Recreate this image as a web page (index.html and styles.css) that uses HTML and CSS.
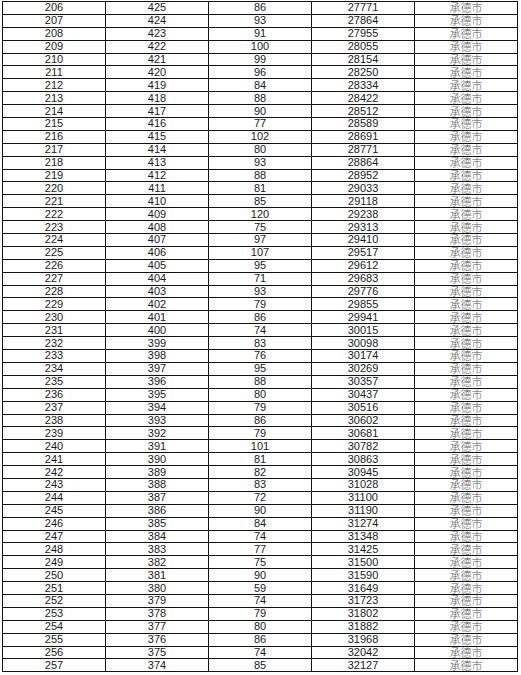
FILE: index.html
```html
<!DOCTYPE html>
<html lang="zh">
<head>
<meta charset="utf-8">
<link rel="stylesheet" href="styles.css">
</head>
<body>
<table class="score-table">
<colgroup><col class="c"><col class="c"><col class="c"><col class="c"><col class="c"></colgroup>
<tbody>
<tr><td>206</td><td>425</td><td>86</td><td>27771</td><td class="city">承德市</td></tr>
<tr><td>207</td><td>424</td><td>93</td><td>27864</td><td class="city">承德市</td></tr>
<tr><td>208</td><td>423</td><td>91</td><td>27955</td><td class="city">承德市</td></tr>
<tr><td>209</td><td>422</td><td>100</td><td>28055</td><td class="city">承德市</td></tr>
<tr><td>210</td><td>421</td><td>99</td><td>28154</td><td class="city">承德市</td></tr>
<tr><td>211</td><td>420</td><td>96</td><td>28250</td><td class="city">承德市</td></tr>
<tr><td>212</td><td>419</td><td>84</td><td>28334</td><td class="city">承德市</td></tr>
<tr><td>213</td><td>418</td><td>88</td><td>28422</td><td class="city">承德市</td></tr>
<tr><td>214</td><td>417</td><td>90</td><td>28512</td><td class="city">承德市</td></tr>
<tr><td>215</td><td>416</td><td>77</td><td>28589</td><td class="city">承德市</td></tr>
<tr><td>216</td><td>415</td><td>102</td><td>28691</td><td class="city">承德市</td></tr>
<tr><td>217</td><td>414</td><td>80</td><td>28771</td><td class="city">承德市</td></tr>
<tr><td>218</td><td>413</td><td>93</td><td>28864</td><td class="city">承德市</td></tr>
<tr><td>219</td><td>412</td><td>88</td><td>28952</td><td class="city">承德市</td></tr>
<tr><td>220</td><td>411</td><td>81</td><td>29033</td><td class="city">承德市</td></tr>
<tr><td>221</td><td>410</td><td>85</td><td>29118</td><td class="city">承德市</td></tr>
<tr><td>222</td><td>409</td><td>120</td><td>29238</td><td class="city">承德市</td></tr>
<tr><td>223</td><td>408</td><td>75</td><td>29313</td><td class="city">承德市</td></tr>
<tr><td>224</td><td>407</td><td>97</td><td>29410</td><td class="city">承德市</td></tr>
<tr><td>225</td><td>406</td><td>107</td><td>29517</td><td class="city">承德市</td></tr>
<tr><td>226</td><td>405</td><td>95</td><td>29612</td><td class="city">承德市</td></tr>
<tr><td>227</td><td>404</td><td>71</td><td>29683</td><td class="city">承德市</td></tr>
<tr><td>228</td><td>403</td><td>93</td><td>29776</td><td class="city">承德市</td></tr>
<tr><td>229</td><td>402</td><td>79</td><td>29855</td><td class="city">承德市</td></tr>
<tr><td>230</td><td>401</td><td>86</td><td>29941</td><td class="city">承德市</td></tr>
<tr><td>231</td><td>400</td><td>74</td><td>30015</td><td class="city">承德市</td></tr>
<tr><td>232</td><td>399</td><td>83</td><td>30098</td><td class="city">承德市</td></tr>
<tr><td>233</td><td>398</td><td>76</td><td>30174</td><td class="city">承德市</td></tr>
<tr><td>234</td><td>397</td><td>95</td><td>30269</td><td class="city">承德市</td></tr>
<tr><td>235</td><td>396</td><td>88</td><td>30357</td><td class="city">承德市</td></tr>
<tr><td>236</td><td>395</td><td>80</td><td>30437</td><td class="city">承德市</td></tr>
<tr><td>237</td><td>394</td><td>79</td><td>30516</td><td class="city">承德市</td></tr>
<tr><td>238</td><td>393</td><td>86</td><td>30602</td><td class="city">承德市</td></tr>
<tr><td>239</td><td>392</td><td>79</td><td>30681</td><td class="city">承德市</td></tr>
<tr><td>240</td><td>391</td><td>101</td><td>30782</td><td class="city">承德市</td></tr>
<tr><td>241</td><td>390</td><td>81</td><td>30863</td><td class="city">承德市</td></tr>
<tr><td>242</td><td>389</td><td>82</td><td>30945</td><td class="city">承德市</td></tr>
<tr><td>243</td><td>388</td><td>83</td><td>31028</td><td class="city">承德市</td></tr>
<tr><td>244</td><td>387</td><td>72</td><td>31100</td><td class="city">承德市</td></tr>
<tr><td>245</td><td>386</td><td>90</td><td>31190</td><td class="city">承德市</td></tr>
<tr><td>246</td><td>385</td><td>84</td><td>31274</td><td class="city">承德市</td></tr>
<tr><td>247</td><td>384</td><td>74</td><td>31348</td><td class="city">承德市</td></tr>
<tr><td>248</td><td>383</td><td>77</td><td>31425</td><td class="city">承德市</td></tr>
<tr><td>249</td><td>382</td><td>75</td><td>31500</td><td class="city">承德市</td></tr>
<tr><td>250</td><td>381</td><td>90</td><td>31590</td><td class="city">承德市</td></tr>
<tr><td>251</td><td>380</td><td>59</td><td>31649</td><td class="city">承德市</td></tr>
<tr><td>252</td><td>379</td><td>74</td><td>31723</td><td class="city">承德市</td></tr>
<tr><td>253</td><td>378</td><td>79</td><td>31802</td><td class="city">承德市</td></tr>
<tr><td>254</td><td>377</td><td>80</td><td>31882</td><td class="city">承德市</td></tr>
<tr><td>255</td><td>376</td><td>86</td><td>31968</td><td class="city">承德市</td></tr>
<tr><td>256</td><td>375</td><td>74</td><td>32042</td><td class="city">承德市</td></tr>
<tr><td>257</td><td>374</td><td>85</td><td>32127</td><td class="city">承德市</td></tr>
</tbody>
</table>
</body>
</html>
```
FILE: styles.css
```css
html, body {
  margin: 0;
  padding: 0;
  background: #ffffff;
}
body {
  padding: 1px 0 0 2px;
}
.score-table {
  border-collapse: collapse;
  table-layout: fixed;
  width: 515px;
  font-family: "Liberation Sans", Arial, sans-serif;
  font-size: 11px;
  color: #1a1a1a;
}
.score-table .c {
  width: 103px;
}
.score-table td {
  border: 1px solid #111111;
  height: 11.9px;
  padding: 0;
  line-height: 11px;
  text-align: center;
  vertical-align: middle;
  white-space: nowrap;
}
.score-table td.city {
  font-family: "Noto Sans CJK SC", sans-serif;
  font-size: 11px;
  line-height: 11px;
  color: #5a5a5a;
  font-weight: 300;
}
```
